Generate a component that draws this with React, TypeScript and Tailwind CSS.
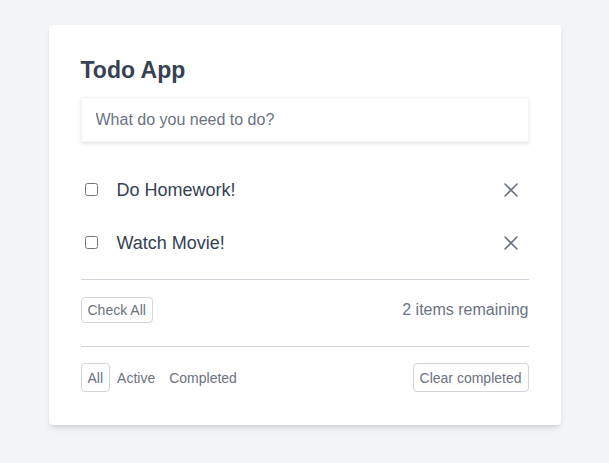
import React, { useState } from 'react';

type Todo = { id: number; title: string; done: boolean };

const XIcon: React.FC = () => (
  <svg width="14" height="14" viewBox="0 0 14 14" fill="none" stroke="currentColor" strokeWidth="1.6" strokeLinecap="round">
    <path d="M1 1 13 13M13 1 1 13" />
  </svg>
);

export default function App() {
  const [todos, setTodos] = useState<Todo[]>([
    { id: 1, title: 'Do Homework!', done: false },
    { id: 2, title: 'Watch Movie!', done: false },
  ]);
  const [filter, setFilter] = useState<'all' | 'active' | 'completed'>('all');

  const remaining = todos.filter((t) => !t.done).length;

  const filterBtn = (key: 'all' | 'active' | 'completed', label: string) => (
    <button
      type="button"
      onClick={() => setFilter(key)}
      className={`h-[29px] px-1.5 rounded border text-sm text-gray-500 ${filter === key ? 'border-gray-300' : 'border-transparent'}`}
    >
      {label}
    </button>
  );

  return (
    <div className="min-h-screen bg-gray-100 pt-[25px] font-['Liberation_Sans',Arial,sans-serif]">
      <div className="mx-auto w-[512px] bg-white rounded shadow-md px-8 pt-[29px] pb-[33px]">
        <h1 className="text-[23px] leading-8 font-bold text-gray-700">Todo App</h1>
        <input
          type="text"
          placeholder="What do you need to do?"
          className="mt-[11px] w-full h-[45px] px-[14px] text-base border border-gray-100 shadow-[0_2px_4px_rgba(0,0,0,0.1)] outline-none placeholder:text-gray-500"
        />
        <div className="mt-[21px]">
          {todos.map((t) => (
            <div key={t.id} className="h-[53px] flex items-center justify-between">
              <div className="flex items-center">
                <input
                  type="checkbox"
                  className="ml-1"
                  checked={t.done}
                  onChange={() => setTodos(todos.map((x) => (x.id === t.id ? { ...x, done: !x.done } : x)))}
                />
                <span className="ml-[19px] text-lg text-gray-700">{t.title}</span>
              </div>
              <button
                type="button"
                className="mr-[11px] text-gray-500"
                onClick={() => setTodos(todos.filter((x) => x.id !== t.id))}
              >
                <XIcon />
              </button>
            </div>
          ))}
        </div>
        <div className="mt-[10px] border-t border-gray-300 pt-[17px] pb-[23px] flex items-center justify-between">
          <button
            type="button"
            className="h-[26px] px-1.5 rounded border border-gray-300 text-sm text-gray-500"
            onClick={() => setTodos(todos.map((x) => ({ ...x, done: true })))}
          >
            Check All
          </button>
          <span className="text-base text-gray-500">{remaining} items remaining</span>
        </div>
        <div className="border-t border-gray-300 pt-4 flex items-center justify-between">
          <div className="flex items-center">
            {filterBtn('all', 'All')}
            {filterBtn('active', 'Active')}
            {filterBtn('completed', 'Completed')}
          </div>
          <button
            type="button"
            className="h-[29px] px-1.5 rounded border border-gray-300 text-sm text-gray-500"
            onClick={() => setTodos(todos.filter((x) => !x.done))}
          >
            Clear completed
          </button>
        </div>
      </div>
    </div>
  );
}
